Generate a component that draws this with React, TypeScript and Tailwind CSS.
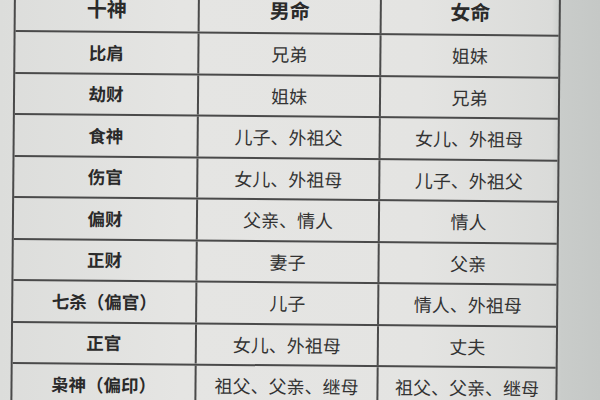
const rows: [string, string, string][] = [
  ["比肩", "兄弟", "姐妹"],
  ["劫财", "姐妹", "兄弟"],
  ["食神", "儿子、外祖父", "女儿、外祖母"],
  ["伤官", "女儿、外祖母", "儿子、外祖父"],
  ["偏财", "父亲、情人", "情人"],
  ["正财", "妻子", "父亲"],
  ["七杀（偏官）", "儿子", "情人、外祖母"],
  ["正官", "女儿、外祖母", "丈夫"],
  ["枭神（偏印）", "祖父、父亲、继母", "祖父、父亲、继母"],
];

const font = { fontFamily: '"Noto Sans CJK SC", "Noto Sans", sans-serif' };

export default function App() {
  return (
    <div
      className="w-[600px] h-[400px] overflow-hidden bg-[linear-gradient(90deg,#dcdddb_0%,#e5e5e3_30%,#e4e4e2_70%,#dadbd9_92%,#c9ccca_93.5%,#c5c8c6_100%)]"
      style={font}
    >
      <div className="ml-[14px] mt-[-15px] w-[547px] origin-top-left rotate-[0.5deg] border-x-2 border-[#4a4a4a]">
        <div className="flex h-[47px] border-b-2 border-[#4a4a4a] text-[20px] font-bold text-[#2a2a2a]">
          <div className="w-[184px] flex items-center justify-center border-r-2 border-[#4a4a4a]">十神</div>
          <div className="w-[182px] flex items-center justify-center border-r-2 border-[#4a4a4a]">男命</div>
          <div className="flex-1 flex items-center justify-center">女命</div>
        </div>
        {rows.map(([god, male, female]) => (
          <div key={god} className="flex h-[41.5px] border-b-2 border-[#4a4a4a] text-[18px] text-[#333333]">
            <div className="w-[184px] flex items-center justify-center border-r-2 border-[#4a4a4a] text-[17.5px] font-bold text-[#2a2a2a]">
              {god}
            </div>
            <div className="w-[182px] flex items-center justify-center border-r-2 border-[#4a4a4a]">{male}</div>
            <div className="flex-1 flex items-center justify-center">{female}</div>
          </div>
        ))}
      </div>
    </div>
  );
}
